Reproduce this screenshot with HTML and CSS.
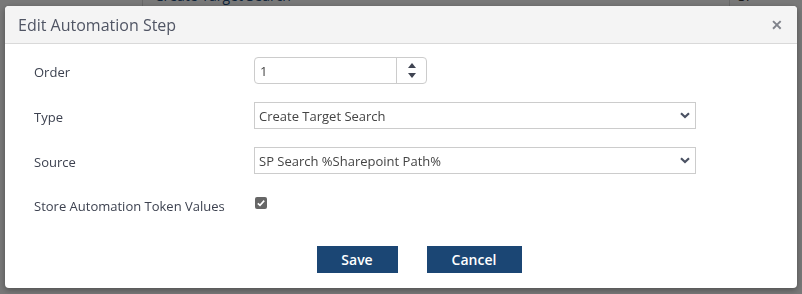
FILE: index.html
```html
<!DOCTYPE html>
<html lang="en">
<head>
    <meta charset="UTF-8">
    <meta name="viewport" content="width=device-width, initial-scale=1.0">
    <title>Edit Automation Step</title>
    <link rel="stylesheet" href="styles.css">
</head>
<body>
    <div class="page">
        <div class="grid-row">
            <div class="cell cell-first"></div>
            <div class="cell cell-name"><a href="#">Create Target Search</a></div>
            <div class="cell cell-source">SP Search</div>
        </div>
    </div>

    <div class="overlay">
        <div class="modal">
            <div class="modal-header">
                <span class="modal-title">Edit Automation Step</span>
                <span class="modal-close">&#x2715;</span>
            </div>
            <form class="modal-body">
                <div class="form-row">
                    <label for="order" class="form-label">Order</label>
                    <div class="number-field">
                        <input type="text" id="order" value="1" class="number-input">
                        <div class="spinner">
                            <span class="spin-up"></span>
                            <span class="spin-down"></span>
                        </div>
                    </div>
                </div>
                <div class="form-row">
                    <label for="type" class="form-label">Type</label>
                    <div class="select-field">
                        <select id="type" class="select-input">
                            <option>Create Target Search</option>
                        </select>
                        <svg class="chevron" width="10" height="7" viewBox="0 0 10 7"><path d="M1 1.2 L5 5 L9 1.2" fill="none" stroke="#4b5263" stroke-width="2.2"/></svg>
                    </div>
                </div>
                <div class="form-row">
                    <label for="source" class="form-label">Source</label>
                    <div class="select-field">
                        <select id="source" class="select-input">
                            <option>SP Search %Sharepoint Path%</option>
                        </select>
                        <svg class="chevron" width="10" height="7" viewBox="0 0 10 7"><path d="M1 1.2 L5 5 L9 1.2" fill="none" stroke="#4b5263" stroke-width="2.2"/></svg>
                    </div>
                </div>
                <div class="form-row form-row-check">
                    <label for="store" class="form-label">Store Automation Token Values</label>
                    <span class="checkbox">
                        <svg width="12" height="12" viewBox="0 0 12 12"><rect width="12" height="12" rx="2" fill="#666"/><path d="M2.8 6.3 L5 8.4 L9.2 3.6" fill="none" stroke="#fff" stroke-width="1.6"/></svg>
                    </span>
                </div>
                <div class="modal-footer">
                    <button type="button" class="btn btn-save">Save</button>
                    <button type="button" class="btn btn-cancel">Cancel</button>
                </div>
            </form>
        </div>
    </div>
</body>
</html>
```

FILE: styles.css
```css
body {
    margin: 0;
    font-family: "Open Sans", Arial, sans-serif;
    background: #fff;
    height: 294px;
    overflow: hidden;
}

.page {
    margin-top: -14px;
}

.grid-row {
    display: flex;
    height: 20px;
    font-size: 14px;
}

.cell-first {
    width: 142px;
    border-right: 1px solid #ddd;
}

.cell-name {
    width: 576px;
    padding-left: 12px;
    border-right: 1px solid #ddd;
}

.cell-name a {
    color: #1b4a7a;
    text-decoration: none;
}

.cell-source {
    padding-left: 8px;
    color: #333;
}

.overlay {
    position: fixed;
    inset: 0;
    background: rgba(0, 0, 0, 0.53);
}

.modal {
    position: absolute;
    left: 5px;
    top: 6px;
    width: 792px;
    height: 282px;
    background: #fff;
    border-radius: 4px;
    box-shadow: 0 2px 6px rgba(0, 0, 0, 0.35);
    overflow: hidden;
}

.modal-header {
    display: flex;
    align-items: center;
    justify-content: space-between;
    height: 37px;
    padding: 0 14px 0 13px;
    background: #f4f4f4;
    border-bottom: 1px solid #d9d9d9;
}

.modal-title {
    font-size: 16px;
    color: #505564;
    padding-top: 1px;
}

.modal-close {
    font-size: 14px;
    font-weight: 600;
    color: #80838b;
}

.modal-body {
    padding: 13px 29px 0 29px;
}

.form-row {
    display: grid;
    grid-template-columns: 220px 442px;
    align-items: center;
    height: 27px;
    margin-bottom: 18px;
}

.form-label {
    font-size: 13px;
    color: #3d4250;
    padding-top: 2px;
}

.number-field {
    display: flex;
    width: 173px;
    height: 27px;
    box-sizing: border-box;
    border: 1px solid #ccc;
    border-radius: 4px;
}

.number-input {
    flex: 1;
    min-width: 0;
    border: none;
    outline: none;
    padding: 0 0 0 5px;
    font-family: "Open Sans", Arial, sans-serif;
    font-size: 13px;
    color: #444;
    background: transparent;
}

.spinner {
    width: 29px;
    border-left: 1px solid #ccc;
    display: flex;
    flex-direction: column;
    align-items: center;
    justify-content: center;
    gap: 5px;
}

.spin-up,
.spin-down {
    width: 0;
    height: 0;
    border-left: 4px solid transparent;
    border-right: 4px solid transparent;
}

.spin-up {
    border-bottom: 5px solid #3f4452;
}

.spin-down {
    border-top: 5px solid #3f4452;
}

.select-field {
    position: relative;
    width: 442px;
    height: 27px;
}

.select-input {
    appearance: none;
    width: 100%;
    height: 27px;
    border: 1px solid #ccc;
    border-radius: 0;
    background: #fff;
    padding: 0 0 0 4px;
    font-family: "Open Sans", Arial, sans-serif;
    font-size: 13px;
    color: #444;
}

.chevron {
    position: absolute;
    right: 6px;
    top: 10px;
    pointer-events: none;
}

.form-row-check {
    align-items: start;
    height: 32px;
    margin-top: 18px;
    margin-bottom: 0;
}

.form-row-check .form-label {
    padding-top: 5px;
}

.checkbox {
    display: block;
    width: 12px;
    height: 12px;
    padding-top: 5px;
    margin-left: 1px;
}

.checkbox svg {
    display: block;
}

.modal-footer {
    display: flex;
    justify-content: center;
    gap: 29px;
    padding-left: 36px;
    margin-top: 22px;
}

.btn {
    height: 27px;
    border: none;
    border-radius: 0;
    background: #1b4674;
    color: #fff;
    font-family: "Open Sans", Arial, sans-serif;
    font-size: 14px;
    font-weight: 600;
    cursor: pointer;
}

.btn-save {
    width: 81px;
}

.btn-cancel {
    width: 95px;
}
```
